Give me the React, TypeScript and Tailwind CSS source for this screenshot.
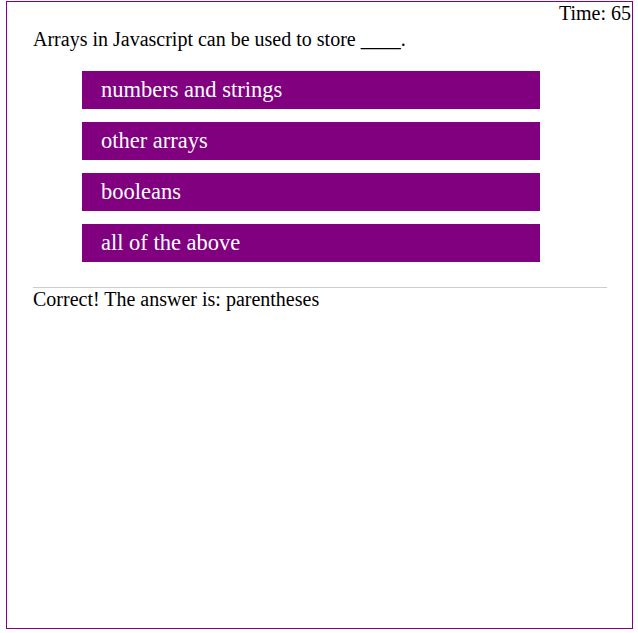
import React from 'react';

const choices = ['numbers and strings', 'other arrays', 'booleans', 'all of the above'];

const App = () => {
  return (
    <div className="min-h-screen bg-white font-['Liberation_Serif',serif] text-black">
      <div className="relative ml-[6px] mt-[1px] h-[628px] w-[627px] border border-[#800080]">
        {/* Timer */}
        <div className="absolute right-[1px] top-0 text-[20px] leading-[23px]">Time: 65</div>

        <div className="pl-[26px] pr-[25px] pt-[26px]">
          <p className="text-[20px] leading-[23px]">Arrays in Javascript can be used to store ____.</p>

          <ul className="mt-[20px] flex flex-col gap-[13px] pl-[49px]">
            {choices.map((c) => (
              <li key={c}>
                <button className="flex h-[38px] w-[458px] items-center bg-[#800080] pl-[19px] text-left text-[22.5px] text-white">
                  {c}
                </button>
              </li>
            ))}
          </ul>

          <div className="mt-[25px] border-t border-[#cccccc] text-[20px] leading-[23px]">
            Correct! The answer is: parentheses
          </div>
        </div>
      </div>
    </div>
  );
};

export default App;
